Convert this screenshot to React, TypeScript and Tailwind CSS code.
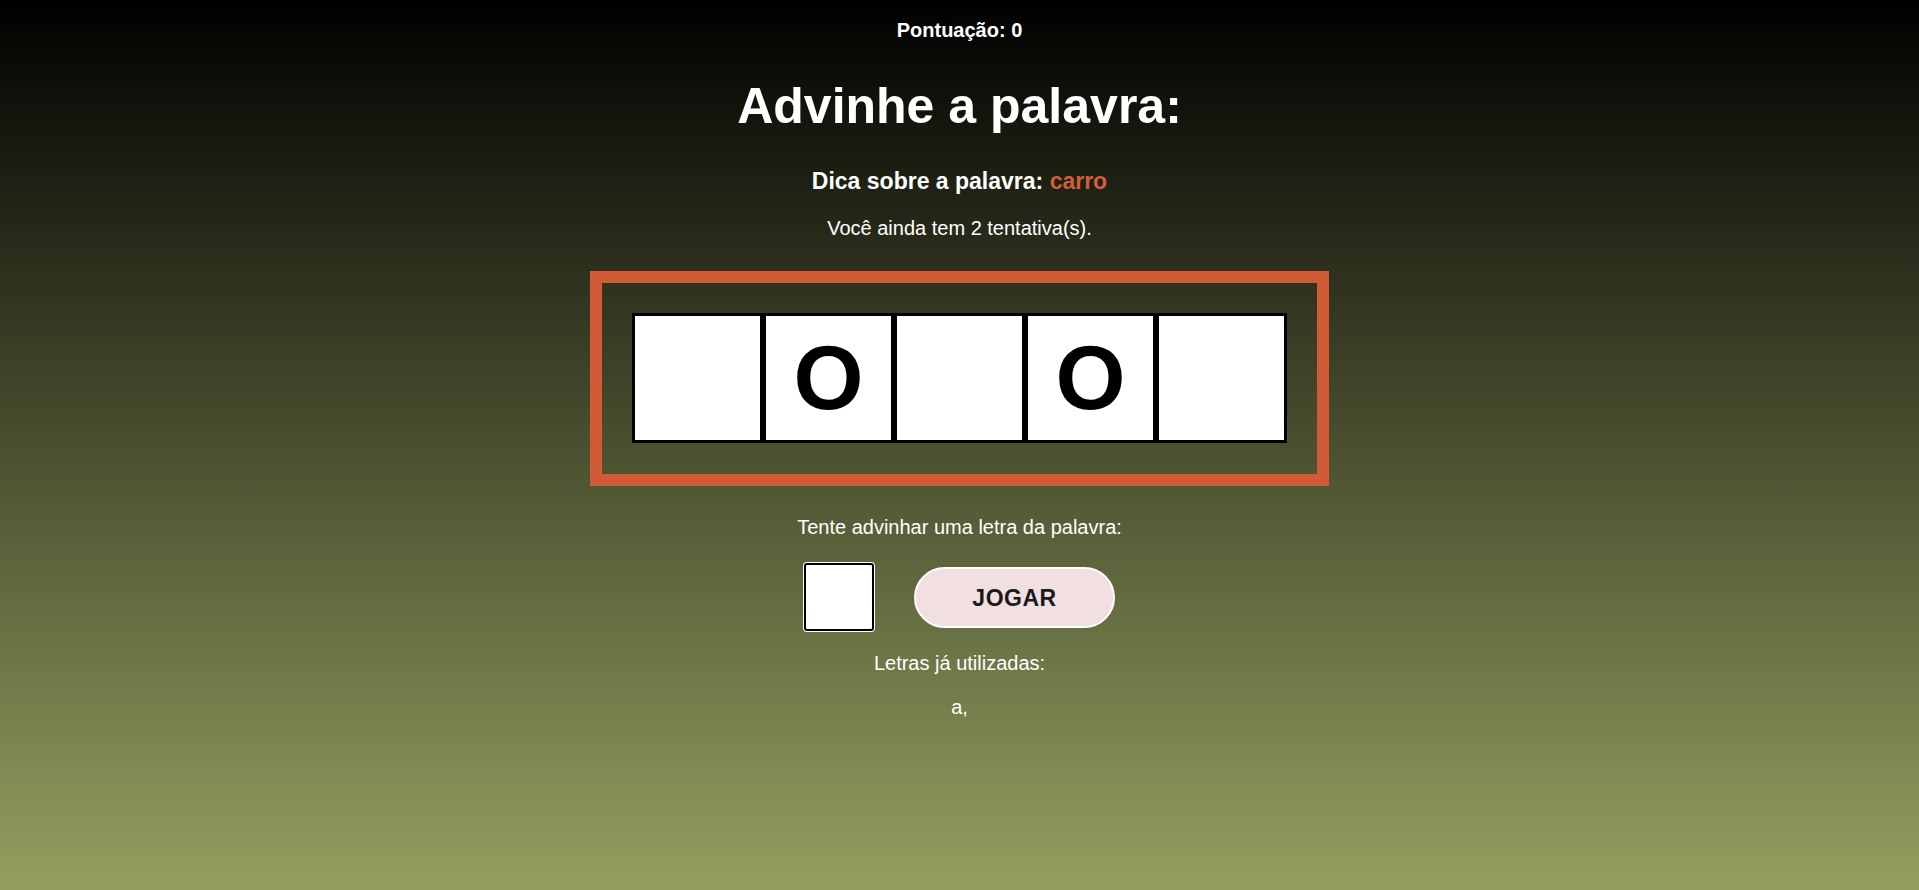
import React from "react";

const letters = ["", "O", "", "O", ""];

export default function App() {
  return (
    <div
      className="min-h-screen w-full bg-[linear-gradient(to_bottom,#000000,#949f5f)] text-white flex flex-col items-center"
      style={{ fontFamily: '"Liberation Sans", Arial, sans-serif' }}
    >
      <div className="mt-[19px] text-[20px] leading-[23px] font-bold">Pontuação: 0</div>
      <h1 className="mt-[35px] text-[50px] leading-[58px] font-bold">Advinhe a palavra:</h1>
      <div className="mt-[33px] text-[23px] leading-[26px] font-bold">
        Dica sobre a palavra: <span className="text-[#d35e3a]">carro</span>
      </div>
      <div className="mt-[23px] text-[20px] leading-[23px]">Você ainda tem 2 tentativa(s).</div>
      <div className="mt-[31px] border-[12px] border-[#d15b37] pt-[30px] pb-[31px] px-[30px] flex">
        {letters.map((l, i) => (
          <div
            key={i}
            className="w-[131px] h-[130px] border-[3px] border-black bg-white flex items-center justify-center text-black text-[90px] font-bold leading-none"
          >
            {l}
          </div>
        ))}
      </div>
      <div className="mt-[30px] text-[20px] leading-[23px]">Tente advinhar uma letra da palavra:</div>
      <div className="mt-[24px] flex items-center gap-[40px]">
        <input
          type="text"
          maxLength={1}
          className="w-[70px] h-[68px] bg-white border-2 border-black rounded-[3px] ring-1 ring-white text-black text-center text-[30px] outline-none"
          style={{ fontFamily: '"Liberation Sans", Arial, sans-serif' }}
        />
        <button
          className="w-[201px] h-[61px] pt-[2px] rounded-full border-2 border-white bg-[#f1dfe1] text-[#1a1a1a] text-[23px] tracking-[0.5px] font-bold"
          style={{ fontFamily: '"Liberation Sans", Arial, sans-serif' }}
        >
          JOGAR
        </button>
      </div>
      <div className="mt-[21px] text-[20px] leading-[23px]">Letras já utilizadas:</div>
      <div className="mt-[21px] text-[20px] leading-[23px]">a,</div>
    </div>
  );
}
